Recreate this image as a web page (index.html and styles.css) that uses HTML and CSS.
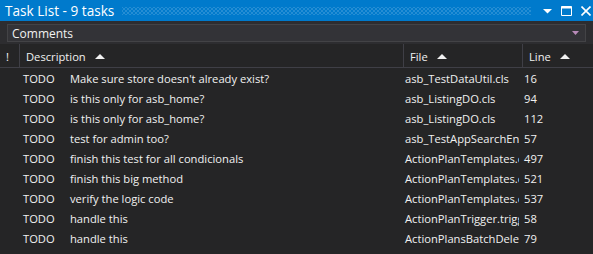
FILE: index.html
```html
<!DOCTYPE html>
<html lang="en">
<head>
    <meta charset="UTF-8">
    <title>Task List</title>
    <link rel="stylesheet" href="styles.css">
</head>
<body>
    <div class="panel">
        <div class="titlebar">
            <span class="title">Task List - 9 tasks</span>
            <span class="grip"></span>
            <div class="win-buttons">
                <svg width="9" height="6" viewBox="0 0 9 6"><path d="M0 1h9L4.5 5.5z" fill="#fff"/></svg>
                <svg width="11" height="10" viewBox="0 0 11 10"><path d="M0.5 0.5h10v9h-10z" fill="none" stroke="#fff"/><path d="M0.5 1.5h10" stroke="#fff" stroke-width="2"/></svg>
                <svg width="10" height="10" viewBox="0 0 10 10"><path d="M0.5 0.5L9.5 9.5M9.5 0.5L0.5 9.5" stroke="#fff" stroke-width="1.6"/></svg>
            </div>
        </div>
        <div class="toolbar">
            <div class="combo">
                <span>Comments</span>
                <svg width="7" height="4" viewBox="0 0 7 4"><path d="M0 0h7L3.5 4z" fill="#b88ab8"/></svg>
            </div>
        </div>
        <div class="grid header">
            <div class="cell">!</div>
            <div class="cell">Description <span class="sort"></span></div>
            <div class="cell">File <span class="sort"></span></div>
            <div class="cell">Line <span class="sort"></span></div>
        </div>
        <div class="rows">
            <div class="grid row"><div></div><div class="desc"><span class="token">TODO</span>Make sure store doesn't already exist?</div><div class="file">asb_TestDataUtil.cls</div><div class="line">16</div></div>
            <div class="grid row"><div></div><div class="desc"><span class="token">TODO</span>is this only for asb_home?</div><div class="file">asb_ListingDO.cls</div><div class="line">94</div></div>
            <div class="grid row"><div></div><div class="desc"><span class="token">TODO</span>is this only for asb_home?</div><div class="file">asb_ListingDO.cls</div><div class="line">112</div></div>
            <div class="grid row"><div></div><div class="desc"><span class="token">TODO</span>test for admin too?</div><div class="file">asb_TestAppSearchEngine.cls</div><div class="line">57</div></div>
            <div class="grid row"><div></div><div class="desc"><span class="token">TODO</span>finish this test for all condicionals</div><div class="file">ActionPlanTemplates.cls</div><div class="line">497</div></div>
            <div class="grid row"><div></div><div class="desc"><span class="token">TODO</span>finish this big method</div><div class="file">ActionPlanTemplates.cls</div><div class="line">521</div></div>
            <div class="grid row"><div></div><div class="desc"><span class="token">TODO</span>verify the logic code</div><div class="file">ActionPlanTemplates.cls</div><div class="line">537</div></div>
            <div class="grid row"><div></div><div class="desc"><span class="token">TODO</span>handle this</div><div class="file">ActionPlanTrigger.trigger</div><div class="line">58</div></div>
            <div class="grid row"><div></div><div class="desc"><span class="token">TODO</span>handle this</div><div class="file">ActionPlansBatchDelete.cls</div><div class="line">79</div></div>
        </div>
    </div>
</body>
</html>
```

FILE: styles.css
```css
body {
    margin: 0;
    background: #252526;
    font-family: 'Open Sans', 'Noto Sans', sans-serif;
    font-size: 11.2px;
    color: #f1f1f1;
}

.panel {
    width: 593px;
    height: 254px;
    overflow: hidden;
    background: #252526;
}

.titlebar {
    height: 21px;
    background: #007acc;
    display: flex;
    align-items: center;
    padding: 0 2px 0 5px;
    box-sizing: border-box;
}

.title {
    color: #ffffff;
    font-size: 13.6px;
    white-space: nowrap;
}

.grip {
    flex: 1;
    height: 8px;
    margin: 0 12px 0 8px;
    background-image:
        radial-gradient(circle, #4fa3dc 0.6px, transparent 0.8px),
        radial-gradient(circle, #4fa3dc 0.6px, transparent 0.8px);
    background-size: 4px 4px;
    background-position: 0 0, 2px 2px;
}

.win-buttons {
    display: flex;
    align-items: center;
    gap: 9px;
}

.toolbar {
    background: #2d2d30;
    height: 23px;
    padding: 3px 7px 0 7px;
    box-sizing: border-box;
}

.combo {
    height: 18px;
    box-sizing: border-box;
    border: 1px solid #434346;
    background: #333337;
    display: flex;
    align-items: center;
    justify-content: space-between;
    padding: 0 6px 0 4px;
    color: #f1f1f1;
    font-size: 12px;
}

.grid {
    display: grid;
    grid-template-columns: 19px 384px 119px 71px;
}

.header {
    height: 24px;
    box-sizing: border-box;
    border-bottom: 1px solid #3f3f46;
}

.header .cell {
    display: flex;
    align-items: center;
    padding: 1px 0 0 6px;
    border-left: 1px solid #3f3f46;
}

.header .cell:first-child {
    border-left: none;
    padding-left: 6px;
}

.sort {
    display: inline-block;
    width: 0;
    height: 0;
    margin-left: 9px;
    border-left: 5px solid transparent;
    border-right: 5px solid transparent;
    border-bottom: 5px solid #f1f1f1;
}

.row {
    height: 20px;
    padding-top: 1px;
    box-sizing: border-box;
    align-items: center;
    white-space: nowrap;
}

.desc {
    padding-left: 4px;
}

.token {
    display: inline-block;
    width: 47px;
}

.file {
    overflow: hidden;
    padding-left: 2px;
    margin-right: 3px;
}

.line {
    padding-left: 2px;
}
```
